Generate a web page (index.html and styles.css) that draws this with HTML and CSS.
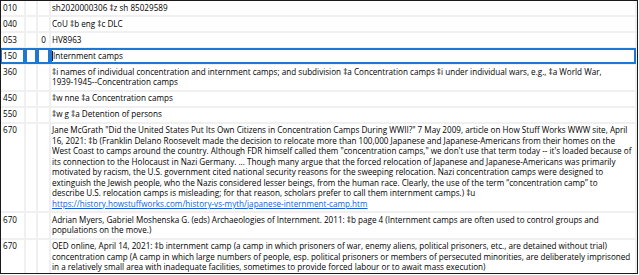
FILE: index.html
```html
<!DOCTYPE html>
<html>
<head>
<meta charset="utf-8">
<link rel="stylesheet" href="styles.css">
</head>
<body>
<div class="grid">
  <div class="row"><div class="cell tag">010</div><div class="cell ind"></div><div class="cell ind"></div><div class="cell data">sh2020000306 ‡z sh 85029589</div></div>
  <div class="row"><div class="cell tag">040</div><div class="cell ind"></div><div class="cell ind"></div><div class="cell data">CoU ‡b eng ‡c DLC</div></div>
  <div class="row"><div class="cell tag">053</div><div class="cell ind"></div><div class="cell ind">0</div><div class="cell data">HV8963</div></div>
  <div class="row selected"><div class="cell tag">150</div><div class="cell ind"></div><div class="cell ind"></div><div class="cell data"><span class="caret"></span>Internment camps</div></div>
  <div class="row"><div class="cell tag">360</div><div class="cell ind"></div><div class="cell ind"></div><div class="cell data">‡i names of individual concentration and internment camps; and subdivision ‡a Concentration camps ‡i under individual wars, e.g., ‡a World War,<br>1939-1945--Concentration camps</div></div>
  <div class="row"><div class="cell tag">450</div><div class="cell ind"></div><div class="cell ind"></div><div class="cell data">‡w nne ‡a Concentration camps</div></div>
  <div class="row"><div class="cell tag">550</div><div class="cell ind"></div><div class="cell ind"></div><div class="cell data">‡w g ‡a Detention of persons</div></div>
  <div class="row"><div class="cell tag">670</div><div class="cell ind"></div><div class="cell ind"></div><div class="cell data">Jane McGrath "Did the United States Put Its Own Citizens in Concentration Camps During WWII?" 7 May 2009, article on How Stuff Works WWW site, April<br>16, 2021: ‡b (Franklin Delano Roosevelt made the decision to relocate more than 100,000 Japanese and Japanese-Americans from their homes on the<br>West Coast to camps around the country. Although FDR himself called them "concentration camps," we don't use that term today -- it's loaded because of<br>its connection to the Holocaust in Nazi Germany. ... Though many argue that the forced relocation of Japanese and Japanese-Americans was primarily<br>motivated by racism, the U.S. government cited national security reasons for the sweeping relocation. Nazi concentration camps were designed to<br>extinguish the Jewish people, who the Nazis considered lesser beings, from the human race. Clearly, the use of the term “concentration camp” to<br>describe U.S. relocation camps is misleading; for that reason, scholars prefer to call them internment camps.) ‡u<br><a class="link" href="#">https://history.howstuffworks.com/history-vs-myth/japanese-internment-camp.htm</a></div></div>
  <div class="row"><div class="cell tag">670</div><div class="cell ind"></div><div class="cell ind"></div><div class="cell data">Adrian Myers, Gabriel Moshenska G. (eds) Archaeologies of Internment. 2011: ‡b page 4 (Internment camps are often used to control groups and<br>populations on the move.)</div></div>
  <div class="row"><div class="cell tag">670</div><div class="cell ind"></div><div class="cell ind"></div><div class="cell data">OED online, April 14, 2021: ‡b internment camp (a camp in which prisoners of war, enemy aliens, political prisoners, etc., are detained without trial)<br>concentration camp (A camp in which large numbers of people, esp. political prisoners or members of persecuted minorities, are deliberately imprisoned<br>in a relatively small area with inadequate facilities, sometimes to provide forced labour or to await mass execution)</div></div>
</div>
</body>
</html>
```
FILE: styles.css
```css
html, body {
  margin: 0;
  padding: 0;
  background: #ffffff;
}
.grid {
  box-sizing: border-box;
  width: 638px;
  height: 274px;
  overflow: hidden;
  border: 1px solid #1a1a1a;
  background: #f0f0f0;
  padding: 0 2px 0 0;
  display: flex;
  flex-direction: column;
  gap: 2px;
  font-family: "Open Sans", "Noto Sans", sans-serif;
  font-size: 8.15px;
  line-height: 10.5px;
  color: #000;
}
.row {
  display: grid;
  grid-template-columns: 23px 10px 11px 1fr;
  column-gap: 2px;
  flex-shrink: 0;
}
.cell {
  background: #ffffff;
  padding: 1.75px 1px;
  min-height: 10.5px;
}
.tag {
  padding-left: 2px;
}
.ind {
  text-align: center;
}
.data {
  padding-left: 1px;
}
.selected .cell {
  box-shadow: 0 0 0 1px #1c78d4, inset 0 0 0 1px #1c78d4;
}
.caret {
  display: inline-block;
  width: 1px;
  height: 10px;
  background: #0a1a5c;
  vertical-align: -2px;
}
.link {
  color: #1a5fd0;
  text-decoration: underline;
}
```
